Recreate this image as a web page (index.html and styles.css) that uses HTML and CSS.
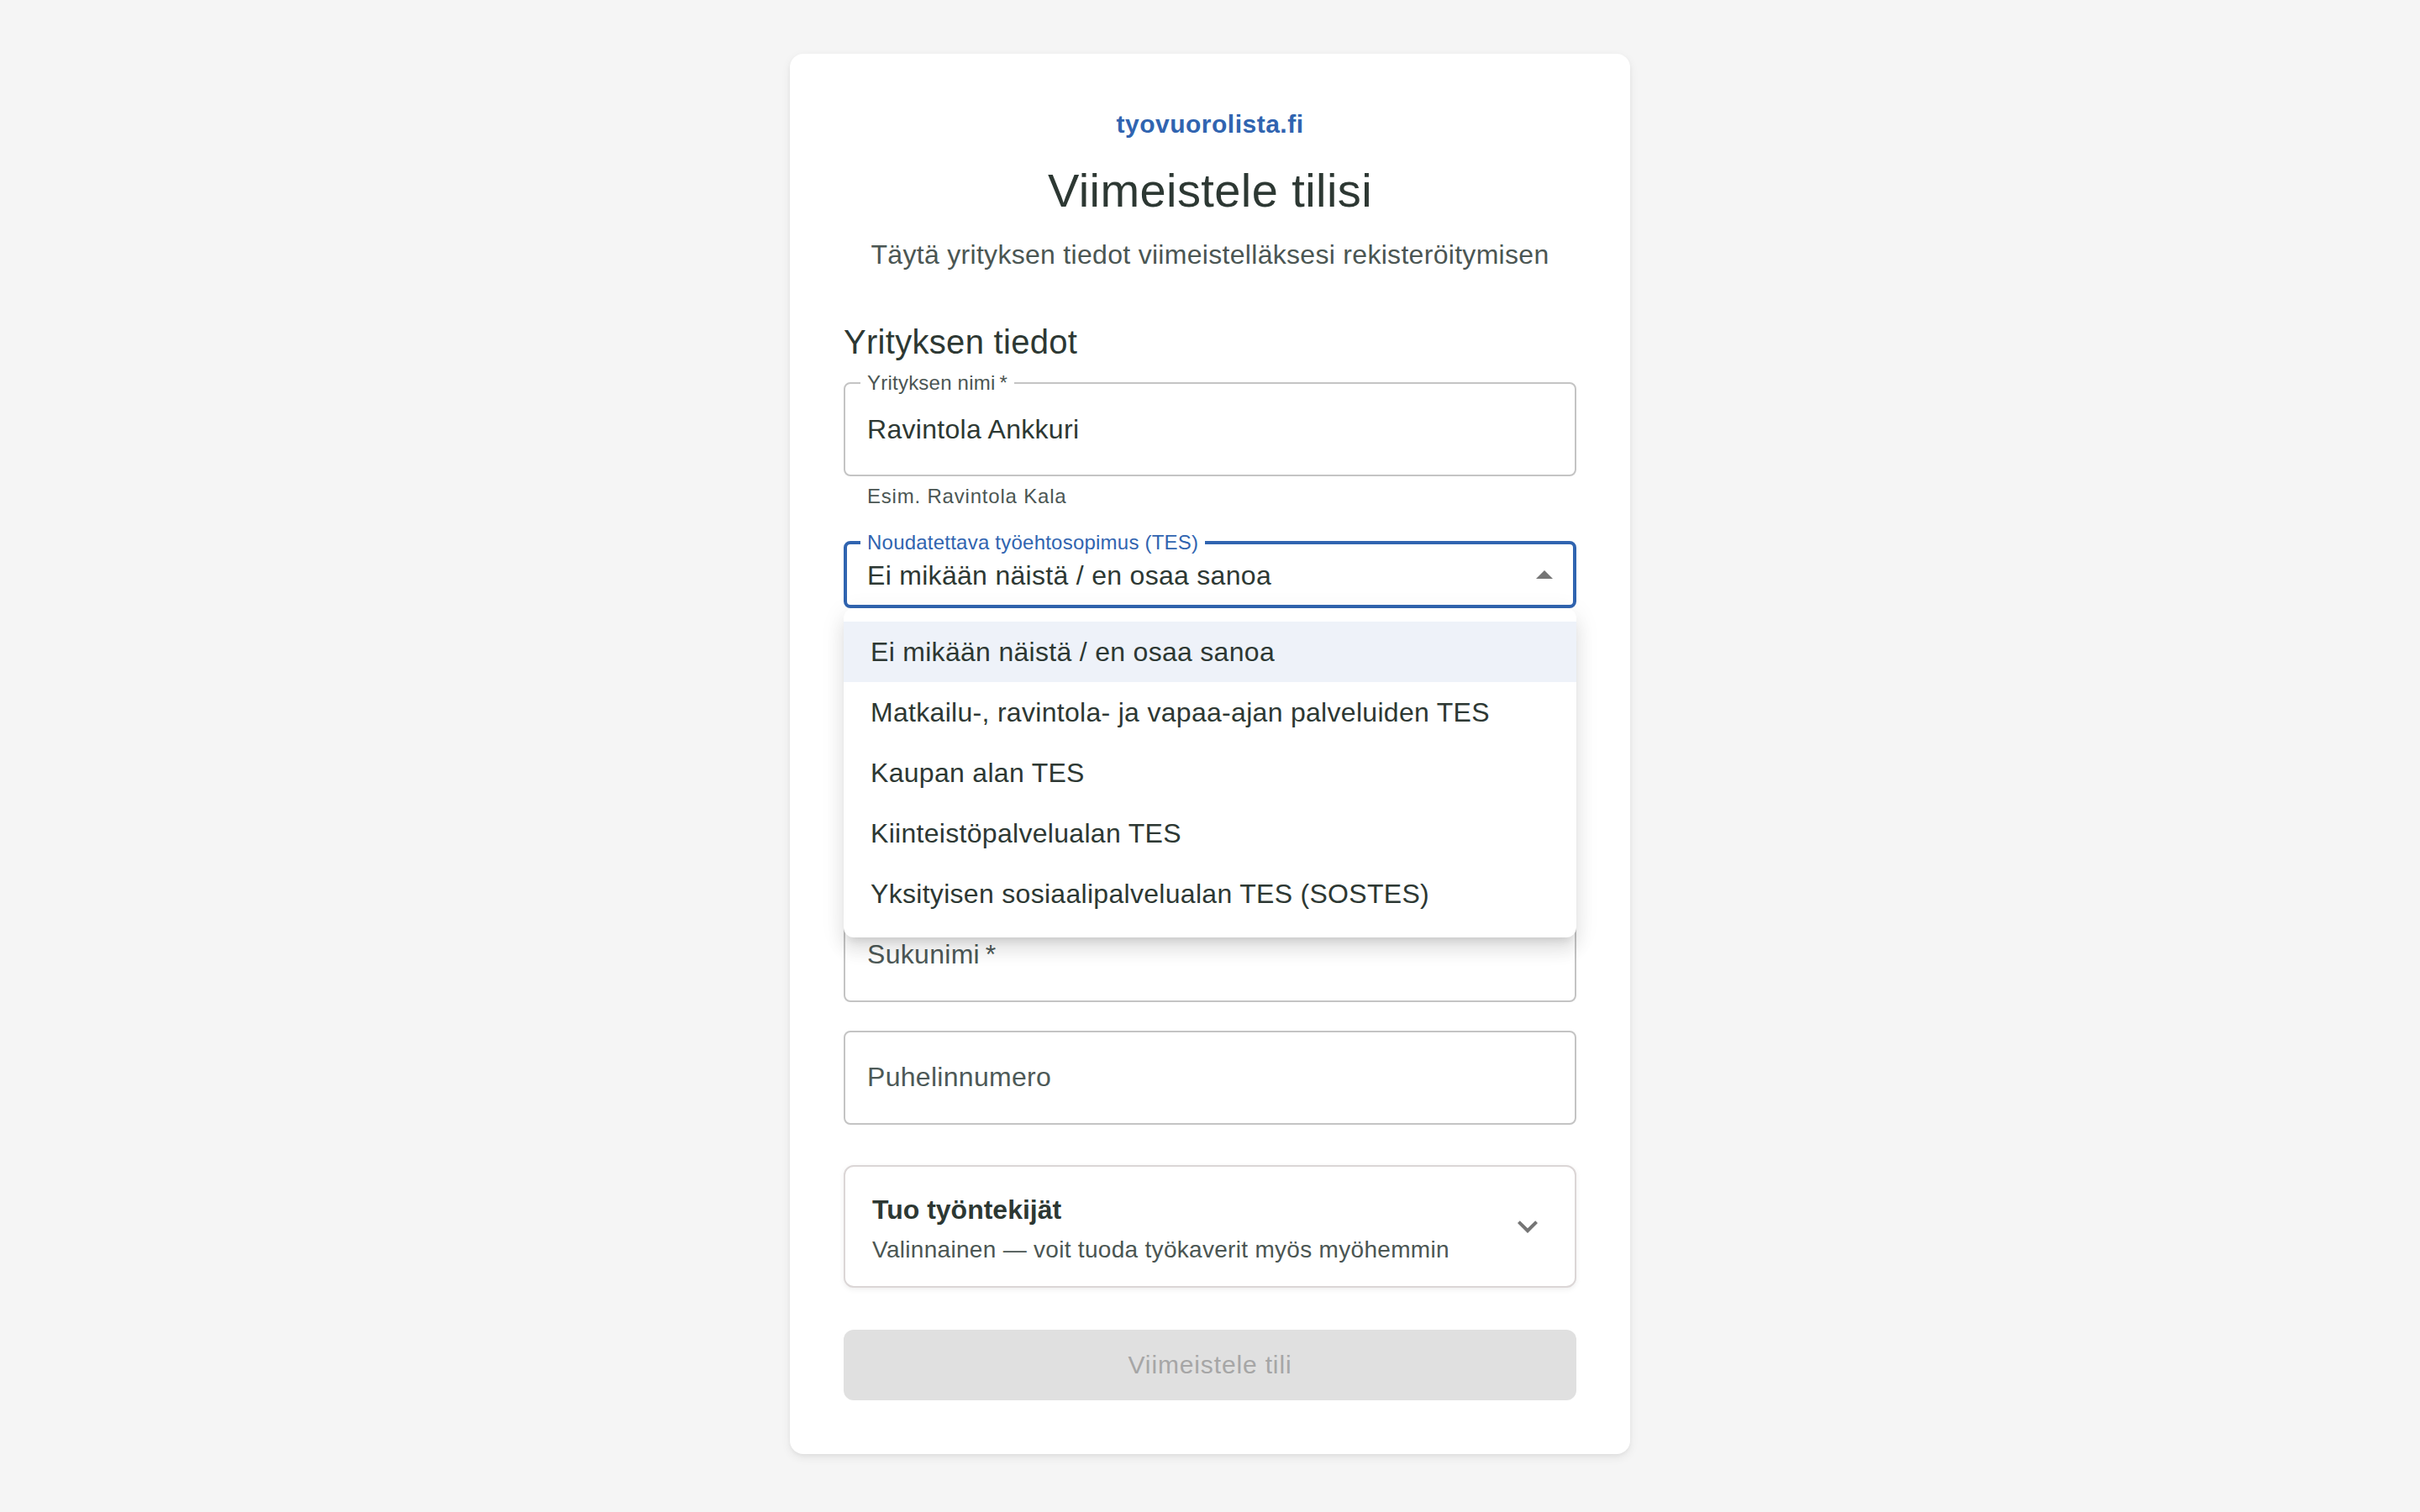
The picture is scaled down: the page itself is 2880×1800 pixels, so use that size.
FILE: index.html
```html
<!DOCTYPE html>
<html lang="fi">
<head>
<meta charset="utf-8">
<title>Viimeistele tilisi – tyovuorolista.fi</title>
<link rel="stylesheet" href="styles.css">
</head>
<body>
<main class="page">
  <section class="card">
    <div class="brand">tyovuorolista.fi</div>
    <h1 class="title">Viimeistele tilisi</h1>
    <p class="subtitle">Täytä yrityksen tiedot viimeistelläksesi rekisteröitymisen</p>
    <form class="form">
      <h2 class="section-title">Yrityksen tiedot</h2>
      <fieldset class="outline">
        <legend class="notch">Yrityksen nimi&thinsp;*</legend>
        <input class="input" type="text" value="Ravintola Ankkuri">
      </fieldset>
      <p class="helper">Esim. Ravintola Kala</p>
      <div class="select-wrap">
        <fieldset class="outline outline-focused">
          <legend class="notch notch-focused">Noudatettava työehtosopimus (TES)</legend>
          <div class="select-row">
            <span class="select-value">Ei mikään näistä / en osaa sanoa</span>
            <svg class="select-arrow" viewBox="0 0 24 24" aria-hidden="true"><path d="M7 14l5-5 5 5z"/></svg>
          </div>
        </fieldset>
        <ul class="menu" role="listbox">
          <li class="menu-item menu-item-selected" role="option">Ei mikään näistä / en osaa sanoa</li>
          <li class="menu-item" role="option">Matkailu-, ravintola- ja vapaa-ajan palveluiden TES</li>
          <li class="menu-item" role="option">Kaupan alan TES</li>
          <li class="menu-item" role="option">Kiinteistöpalvelualan TES</li>
          <li class="menu-item" role="option">Yksityisen sosiaalipalvelualan TES (SOSTES)</li>
        </ul>
      </div>
      <input class="input-box input-first" type="text" placeholder="Etunimi&thinsp;*">
      <input class="input-box input-gap" type="text" placeholder="Sukunimi&thinsp;*">
      <input class="input-box input-gap" type="tel" placeholder="Puhelinnumero">
      <div class="accordion">
        <div class="accordion-summary">
          <div class="accordion-text">
            <div class="accordion-title">Tuo työntekijät</div>
            <div class="accordion-sub">Valinnainen — voit tuoda työkaverit myös myöhemmin</div>
          </div>
          <svg class="chevron" viewBox="0 0 24 24" aria-hidden="true"><path d="M16.59 8.59 12 13.17 7.41 8.59 6 10l6 6 6-6z"/></svg>
        </div>
      </div>
      <button class="submit" type="button" disabled>Viimeistele tili</button>
    </form>
  </section>
</main>
</body>
</html>
```

FILE: styles.css
```css
html {
  zoom: 2;
  background: #f5f5f5;
}

body {
  margin: 0;
  font-family: "Liberation Sans", Arial, Helvetica, sans-serif;
  color: #2d3833;
}

.page {
  display: flex;
  justify-content: center;
  padding: 32px 0;
}

.card {
  width: 500px;
  box-sizing: border-box;
  padding: 32px;
  background: #ffffff;
  border-radius: 8px;
  box-shadow: 0 2px 6px rgba(0, 0, 0, 0.07), 0 1px 2px rgba(0, 0, 0, 0.04);
  display: flex;
  flex-direction: column;
}

.brand {
  font-size: 15px;
  font-weight: 700;
  line-height: 20px;
  letter-spacing: 0.25px;
  color: #3064b0;
  text-align: center;
  margin-bottom: 12px;
}

.title {
  margin: 0 0 9px;
  font-size: 28px;
  font-weight: 400;
  line-height: 1.235;
  letter-spacing: 0.00735em;
  text-align: center;
  color: #2d3833;
}

.subtitle {
  margin: 0 0 24px;
  font-size: 16px;
  line-height: 24px;
  letter-spacing: 0.00938em;
  text-align: center;
  color: #4b5653;
}

.form {
  display: flex;
  flex-direction: column;
  margin: 0;
}

.section-title {
  margin: 0 0 2.5px;
  font-size: 20px;
  font-weight: 400;
  line-height: 32px;
  letter-spacing: 0.0075em;
  color: #2d3833;
}

.outline {
  margin: 0;
  padding: 0;
  min-width: 0;
  border: 1px solid #c4c4c4;
  border-radius: 4px;
}

.notch {
  margin-left: 9px;
  padding: 0 4px;
  font-size: 12px;
  line-height: 12px;
  letter-spacing: 0.00938em;
  color: #4b5653;
}

.input {
  display: block;
  width: 100%;
  box-sizing: border-box;
  height: 48.5px;
  padding: 10px 13px 15.5px;
  border: 0;
  outline: 0;
  background: transparent;
  font-family: inherit;
  font-size: 16px;
  line-height: 23px;
  letter-spacing: 0.00938em;
  color: #2d3833;
}

.helper {
  margin: 2px 14px 0;
  font-size: 12px;
  line-height: 1.66;
  letter-spacing: 0.03333em;
  color: #4b5653;
}

.select-wrap {
  position: relative;
  margin-top: 11.5px;
}

.outline-focused {
  border: 2px solid #3064b0;
}

.notch-focused {
  margin-left: 8px;
  color: #3064b0;
}

.select-row {
  display: flex;
  align-items: center;
  height: 31px;
  box-sizing: border-box;
  padding: 0 5px 4px 12px;
}

.select-value {
  flex: 1;
  font-size: 16px;
  line-height: 23px;
  letter-spacing: 0.00938em;
  color: #2d3833;
}

.select-arrow {
  width: 24px;
  height: 24px;
  fill: #757575;
  flex: none;
}

.menu {
  position: absolute;
  top: 100%;
  left: 0;
  right: 0;
  z-index: 10;
  margin: 0;
  padding: 8px 0;
  list-style: none;
  background: #ffffff;
  border-radius: 6px;
  box-shadow: 0 5px 5px -3px rgba(0, 0, 0, 0.1), 0 8px 10px 1px rgba(0, 0, 0, 0.07), 0 3px 14px 2px rgba(0, 0, 0, 0.06);
}

.menu-item {
  padding: 6px 16px;
  font-size: 16px;
  line-height: 24px;
  letter-spacing: 0.00938em;
  color: #2d3833;
  white-space: nowrap;
}

.menu-item-selected {
  background: #eef2f9;
}

.input-box {
  display: block;
  width: 100%;
  box-sizing: border-box;
  height: 56px;
  margin: 0;
  padding: 0 13px;
  border: 1px solid #c4c4c4;
  border-radius: 4px;
  outline: 0;
  background: #ffffff;
  font-family: inherit;
  font-size: 16px;
  letter-spacing: 0.00938em;
  color: #2d3833;
}

.input-box::placeholder {
  color: #4d5957;
  opacity: 1;
}

.input-first {
  margin-top: 105.5px;
}

.input-gap {
  margin-top: 17px;
}

.accordion {
  margin-top: 24px;
  border: 1px solid #dbd6d6;
  border-radius: 6px;
  background: #ffffff;
  box-shadow: 0 1px 3px rgba(0, 0, 0, 0.07);
}

.accordion-summary {
  display: flex;
  align-items: center;
  gap: 12px;
  padding: 11.5px 16px 11.5px;
}

.accordion-text {
  flex: 1;
  display: flex;
  flex-direction: column;
}

.accordion-title {
  font-size: 16px;
  font-weight: 700;
  line-height: 28px;
  color: #2d3833;
}

.accordion-sub {
  font-size: 14px;
  line-height: 20px;
  letter-spacing: 0.01071em;
  color: #4b5653;
}

.chevron {
  width: 24px;
  height: 24px;
  flex: none;
  fill: #757575;
}

.submit {
  margin-top: 25px;
  height: 42px;
  border: 0;
  border-radius: 6px;
  background: #e0e0e0;
  color: #a6a6a6;
  font-family: inherit;
  font-size: 15px;
  font-weight: 400;
  letter-spacing: 0.02857em;
  cursor: default;
}
```
